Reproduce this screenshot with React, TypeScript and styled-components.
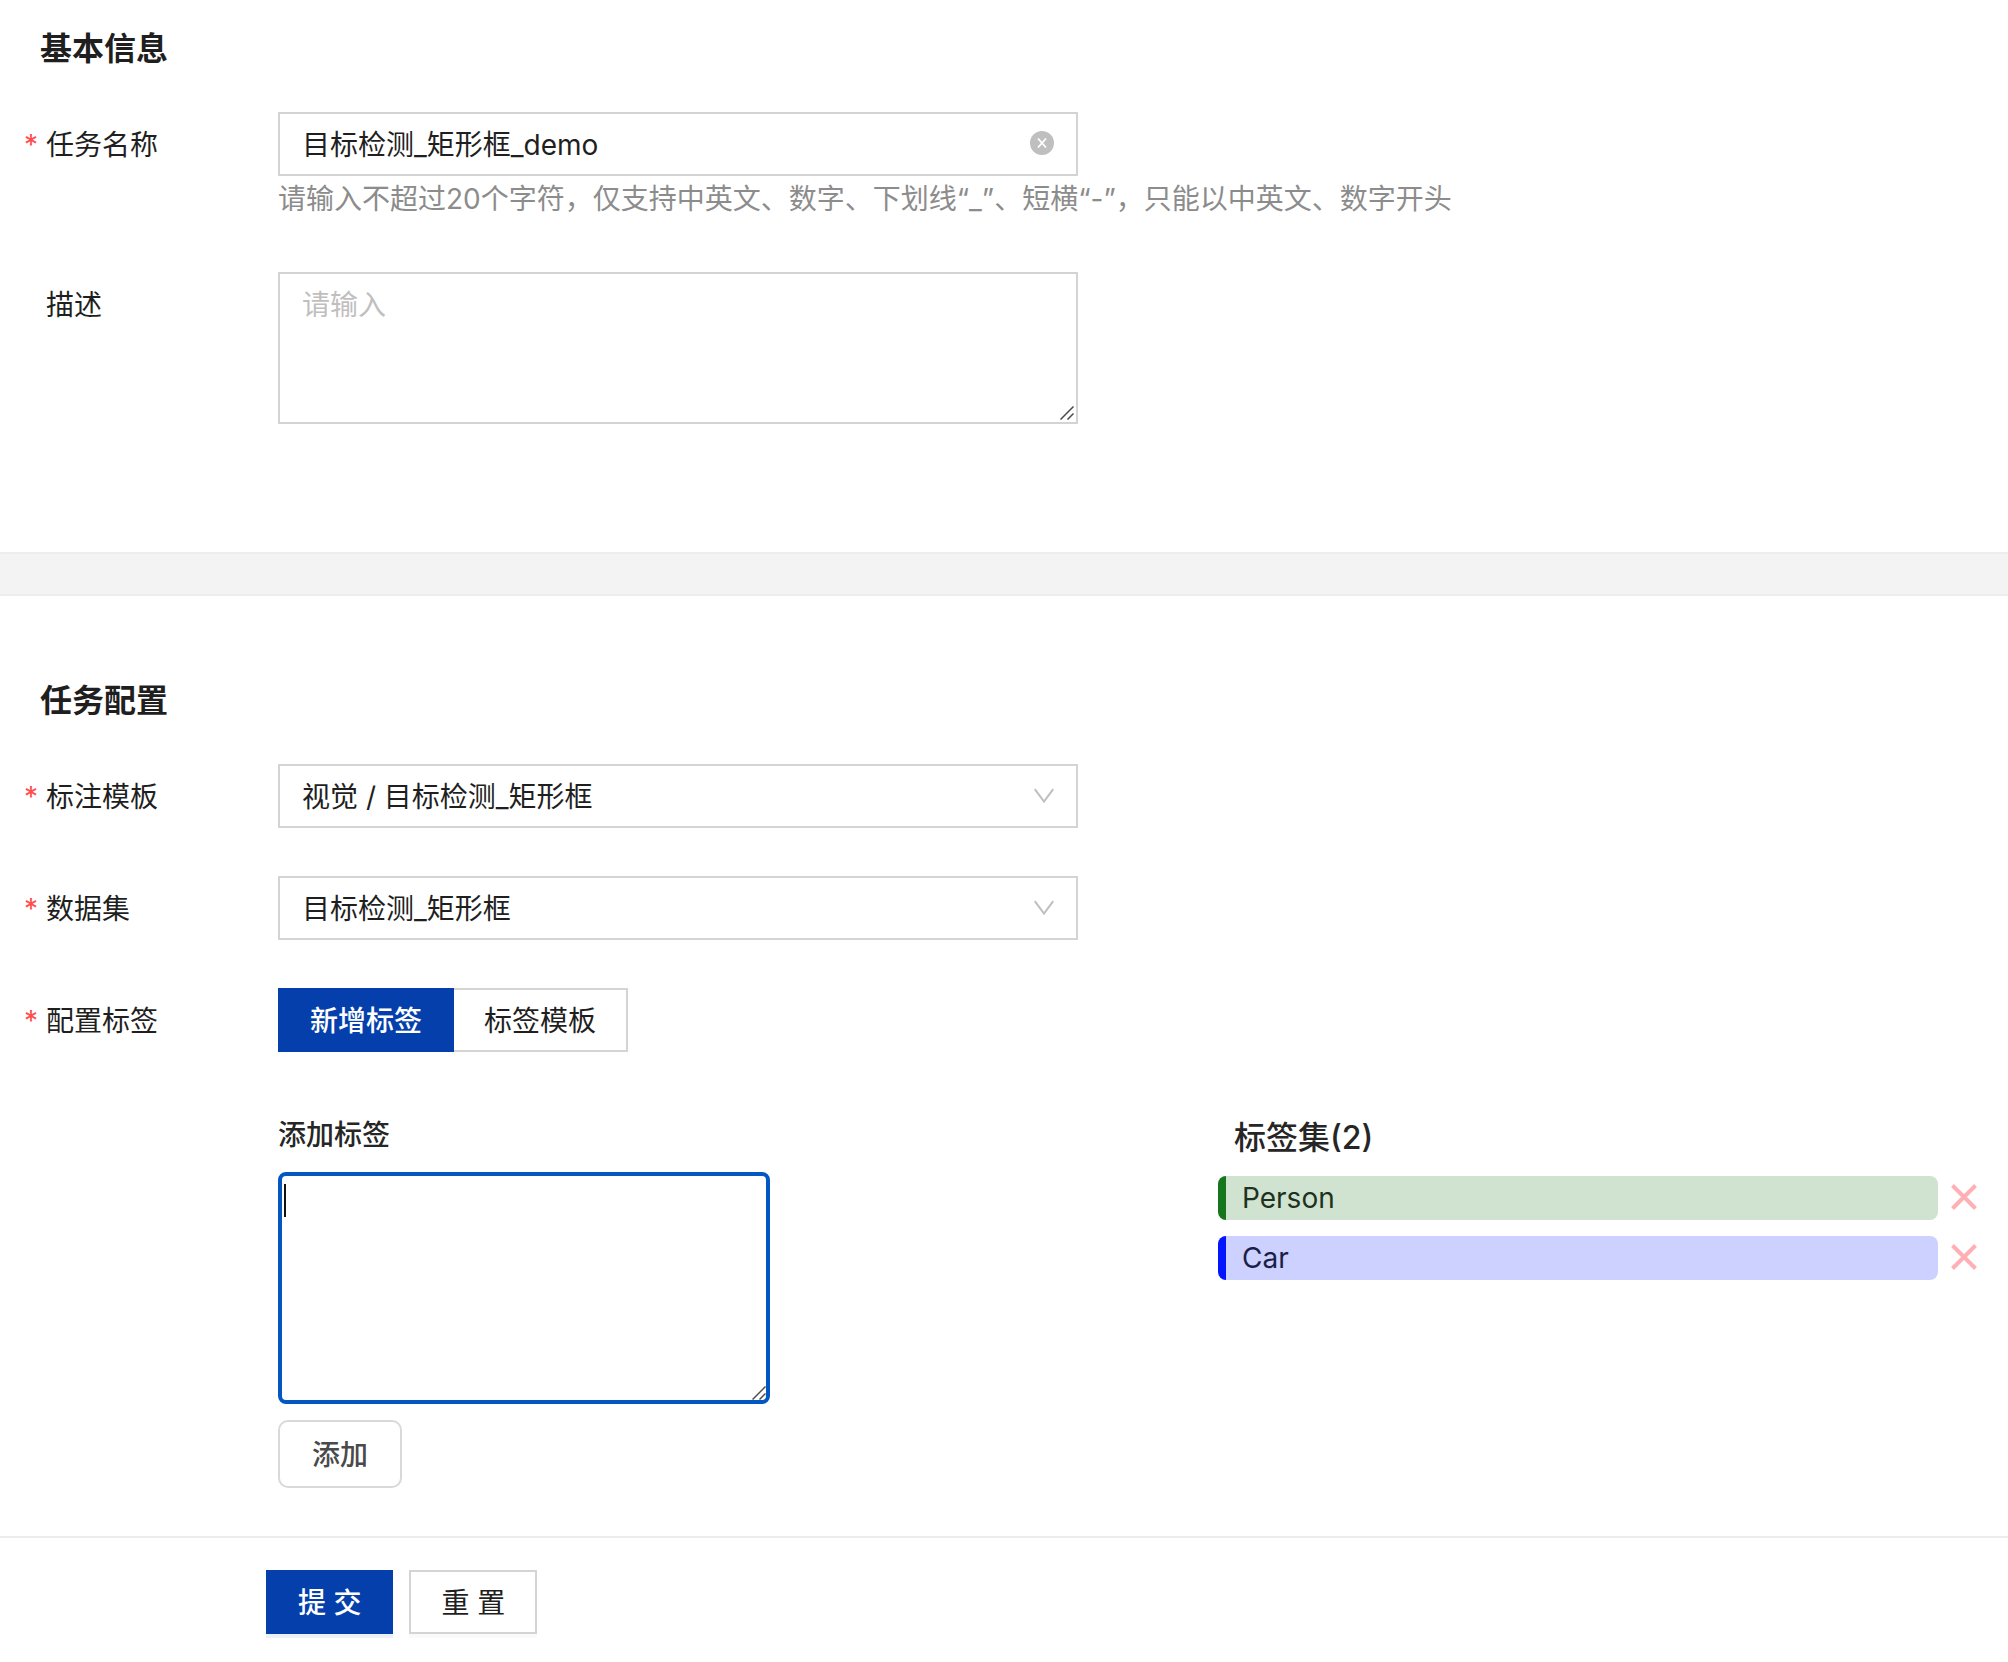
import React, { useState } from "react";
import styled, { createGlobalStyle } from "styled-components";

const GlobalStyle = createGlobalStyle`
  *, *::before, *::after { box-sizing: border-box; }
  body {
    margin: 0;
    background: #fff;
    color: #1f1f1f;
    font-family: Inter, "Noto Sans CJK SC", sans-serif;
    font-size: 28px;
    line-height: 44px;
  }
  button, input, textarea, select { font: inherit; color: inherit; }
`;

const Section = styled.section<{ $top: number; $bottom: number }>`
  padding-top: ${(p) => p.$top}px;
  padding-bottom: ${(p) => p.$bottom}px;
`;

const SectionTitle = styled.h2`
  margin: 0 0 38px;
  padding-left: 40px;
  font-size: 32px;
  font-weight: 600;
  line-height: 50px;
`;

const Rows = styled.div`
  display: flex;
  flex-direction: column;
  gap: 48px;
`;

const Row = styled.div`
  display: grid;
  grid-template-columns: 254px minmax(0, 1fr);
  padding-left: 24px;
`;

const Label = styled.label<{ $required?: boolean }>`
  display: flex;
  align-items: center;
  height: 64px;
  padding-top: 2px;

  &::before {
    content: "${(p) => (p.$required ? "*" : "")}";
    width: 22px;
    color: #ff4d4f;
  }
`;

const Control = styled.div`
  position: relative;
  display: flex;
  max-width: 800px;
`;

const TextInput = styled.input`
  width: 100%;
  height: 64px;
  padding: 0 64px 2px 22px;
  border: 2px solid #d4d4d4;
  border-radius: 0;
  background: #fff;
  outline: none;
`;

const Select = styled.select`
  width: 100%;
  height: 64px;
  padding: 2px 64px 0 22px;
  border: 2px solid #d4d4d4;
  border-radius: 0;
  background: #fff;
  appearance: none;
  outline: none;
`;

const TextArea = styled.textarea`
  display: block;
  width: 100%;
  height: 152px;
  padding: 8px 22px;
  border: 2px solid #d4d4d4;
  border-radius: 0;
  background: #fff;
  line-height: 46px;
  resize: none;
  outline: none;

  &::placeholder { color: #bfbfbf; opacity: 1; }
`;

const Hint = styled.p`
  margin: 0;
  padding-bottom: 2px;
  color: #8c8c8c;
  line-height: 46px;
`;

const ClearButton = styled.button`
  position: absolute;
  right: 24px;
  top: 19px;
  display: flex;
  padding: 0;
  border: 0;
  background: none;
  cursor: pointer;
`;

const Arrow = styled.svg`
  position: absolute;
  right: 22px;
  top: 20px;
  pointer-events: none;
`;

const Grip = styled.svg`
  position: absolute;
  right: 4px;
  bottom: 4px;
  pointer-events: none;
`;

const Band = styled.div`
  height: 44px;
  border-top: 2px solid #ededed;
  border-bottom: 2px solid #ededed;
  background: #f3f3f3;
`;

const Segmented = styled.div`
  display: flex;
`;

const Segment = styled.button<{ $active: boolean }>`
  position: relative;
  z-index: ${(p) => (p.$active ? 1 : 0)};
  height: 64px;
  padding: 2px 30px 0;
  border: 2px solid ${(p) => (p.$active ? "#043fab" : "#d4d4d4")};
  background: ${(p) => (p.$active ? "#043fab" : "#fff")};
  color: ${(p) => (p.$active ? "#fff" : "#1f1f1f")};
  font-weight: ${(p) => (p.$active ? 500 : 400)};
  cursor: pointer;

  & + & { margin-left: -2px; }
`;

const TagEditor = styled.div`
  display: grid;
  grid-template-columns: minmax(0, 94fr) minmax(0, 79fr);
  margin-top: 60px;
`;

const AddPanel = styled.div`
  display: flex;
  flex-direction: column;
  align-items: flex-start;
  gap: 16px;
`;

const AddLabel = styled.label`
  height: 44px;
  color: #262626;
  font-weight: 500;
  line-height: 46px;
`;

const TagBox = styled.div`
  position: relative;
  width: 100%;
  max-width: 492px;
`;

const TagInput = styled.textarea`
  display: block;
  width: 100%;
  height: 232px;
  padding: 4px;
  border: 4px solid #0257c0;
  border-radius: 8px;
  background: #fff;
  caret-color: transparent;
  resize: none;
  outline: none;
`;

const Caret = styled.span`
  position: absolute;
  left: 6px;
  top: 12px;
  width: 2px;
  height: 33px;
  background: #111;
  pointer-events: none;
`;

const AddButton = styled.button`
  height: 68px;
  padding: 2px 32px 0;
  border: 2px solid #d9d9d9;
  border-radius: 10px;
  background: #fff;
  color: #4a4a4a;
  font-weight: 500;
  cursor: pointer;
`;

const TagPanel = styled.div`
  padding-right: 30px;
`;

const TagTitle = styled.h3`
  margin: 0 0 12px;
  padding-left: 16px;
  color: #262626;
  font-size: 32px;
  font-weight: 500;
  line-height: 52px;
`;

const TagList = styled.ul`
  display: flex;
  flex-direction: column;
  gap: 16px;
  margin: 0;
  padding: 0;
  list-style: none;
`;

const TagItem = styled.li`
  display: flex;
  align-items: center;
  gap: 12px;
`;

const TagBar = styled.div<{ $accent: string; $fill: string; $ink: string }>`
  flex: 1;
  height: 44px;
  padding-left: 16px;
  border-left: 8px solid ${(p) => p.$accent};
  border-radius: 8px;
  background: ${(p) => p.$fill};
  color: ${(p) => p.$ink};
`;

const RemoveButton = styled.button`
  display: flex;
  padding: 0;
  border: 0;
  background: none;
  cursor: pointer;
`;

const Footer = styled.footer`
  display: flex;
  gap: 16px;
  padding: 32px 0 28px 266px;
  border-top: 2px solid #ececec;
`;

const FormButton = styled.button<{ $primary?: boolean }>`
  height: 64px;
  padding: 2px 30px 0;
  border: 2px solid ${(p) => (p.$primary ? "#043fab" : "#d4d4d4")};
  background: ${(p) => (p.$primary ? "#043fab" : "#fff")};
  color: ${(p) => (p.$primary ? "#fff" : "#1f1f1f")};
  font-weight: ${(p) => (p.$primary ? 500 : 400)};
  box-shadow: 0 4px 0 ${(p) => (p.$primary ? "#ebf1fa" : "#fafafa")};
  cursor: pointer;
`;

const ChevronDown = () => (
  <Arrow width="24" height="24" viewBox="0 0 24 24" fill="none" stroke="#bfbfbf" strokeWidth="2" aria-hidden="true">
    <path d="M2.8 5.2 L12 17.6 L21.2 5.2" />
  </Arrow>
);

const CornerGrip = () => (
  <Grip width="14" height="14" viewBox="0 0 14 14" fill="none" stroke="#4a4a4a" strokeWidth="1.5" aria-hidden="true">
    <path d="M0.5 13.5 L13.5 0.5 M7.5 13.5 L13.5 7.5" />
  </Grip>
);

const initialTags = [
  { name: "Person", accent: "#15761b", fill: "#d0e3d0", ink: "#1e321e" },
  { name: "Car", accent: "#0314ff", fill: "#cdd1ff", ink: "#1b1f47" },
];

export default function App() {
  const [name, setName] = useState("目标检测_矩形框_demo");
  const [mode, setMode] = useState("新增标签");
  const [tags, setTags] = useState(initialTags);

  return (
    <>
      <GlobalStyle />
      <form onSubmit={(e) => e.preventDefault()}>
        <Section $top={24} $bottom={128}>
          <SectionTitle>基本信息</SectionTitle>
          <Rows>
            <Row>
              <Label $required htmlFor="task-name">任务名称</Label>
              <div>
                <Control>
                  <TextInput id="task-name" value={name} onChange={(e) => setName(e.target.value)} />
                  <ClearButton type="button" aria-label="清除" onClick={() => setName("")}>
                    <svg width="24" height="24" viewBox="0 0 24 24" aria-hidden="true">
                      <circle cx="12" cy="12" r="12" fill="#bfbfbf" />
                      <path d="M8 7.5 L16 16.5 M16 7.5 L8 16.5" stroke="#fff" strokeWidth="1.8" />
                    </svg>
                  </ClearButton>
                </Control>
                <Hint>请输入不超过20个字符，仅支持中英文、数字、下划线“_”、短横“-”，只能以中英文、数字开头</Hint>
              </div>
            </Row>
            <Row>
              <Label htmlFor="task-desc">描述</Label>
              <Control>
                <TextArea id="task-desc" placeholder="请输入" />
                <CornerGrip />
              </Control>
            </Row>
          </Rows>
        </Section>

        <Band />

        <Section $top={80} $bottom={48}>
          <SectionTitle>任务配置</SectionTitle>
          <Rows>
            <Row>
              <Label $required htmlFor="template">标注模板</Label>
              <Control>
                <Select id="template">
                  <option>视觉 / 目标检测_矩形框</option>
                </Select>
                <ChevronDown />
              </Control>
            </Row>
            <Row>
              <Label $required htmlFor="dataset">数据集</Label>
              <Control>
                <Select id="dataset">
                  <option>目标检测_矩形框</option>
                </Select>
                <ChevronDown />
              </Control>
            </Row>
            <Row>
              <Label as="span" $required id="tag-config">配置标签</Label>
              <div>
                <Segmented role="group" aria-labelledby="tag-config">
                  {["新增标签", "标签模板"].map((m) => (
                    <Segment key={m} type="button" $active={m === mode} aria-pressed={m === mode} onClick={() => setMode(m)}>
                      {m}
                    </Segment>
                  ))}
                </Segmented>
                <TagEditor>
                  <AddPanel>
                    <AddLabel htmlFor="new-tags">添加标签</AddLabel>
                    <TagBox>
                      <TagInput id="new-tags" />
                      <Caret />
                      <CornerGrip />
                    </TagBox>
                    <AddButton type="button">添加</AddButton>
                  </AddPanel>
                  <TagPanel>
                    <TagTitle>标签集({tags.length})</TagTitle>
                    <TagList>
                      {tags.map((t) => (
                        <TagItem key={t.name}>
                          <TagBar $accent={t.accent} $fill={t.fill} $ink={t.ink}>{t.name}</TagBar>
                          <RemoveButton
                            type="button"
                            aria-label={`删除 ${t.name}`}
                            onClick={() => setTags(tags.filter((x) => x.name !== t.name))}
                          >
                            <svg width="28" height="28" viewBox="0 0 28 28" aria-hidden="true">
                              <path d="M2.5 1.5 L25.5 24.5 M25.5 1.5 L2.5 24.5" stroke="#ffb0b5" strokeWidth="4" />
                            </svg>
                          </RemoveButton>
                        </TagItem>
                      ))}
                    </TagList>
                  </TagPanel>
                </TagEditor>
              </div>
            </Row>
          </Rows>
        </Section>

        <Footer>
          <FormButton $primary type="submit">提 交</FormButton>
          <FormButton type="reset">重 置</FormButton>
        </Footer>
      </form>
    </>
  );
}
